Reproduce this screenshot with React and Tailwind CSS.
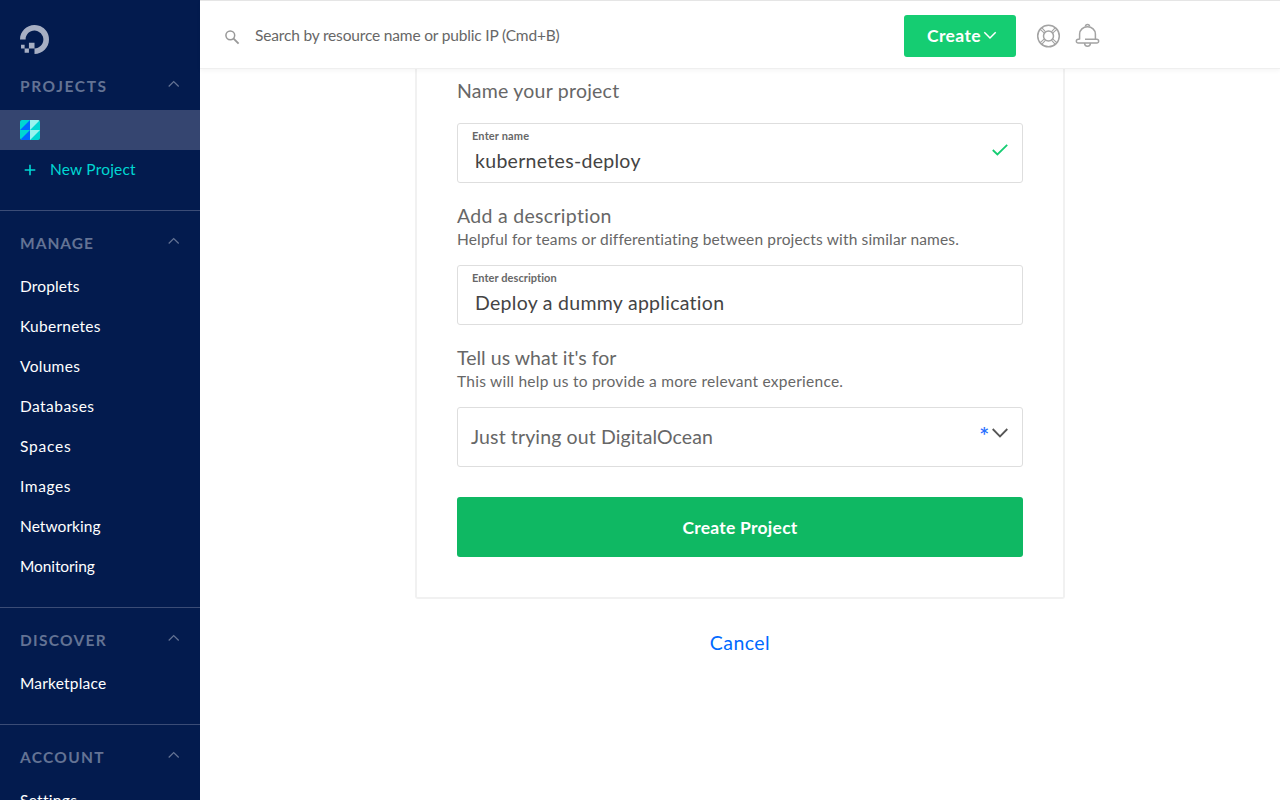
import React from "react";

function Chevron({ className, d, w, h, stroke = 1.2 }) {
  return (
    <svg className={className} width={w} height={h} viewBox={`0 0 ${w} ${h}`} fill="none" stroke="currentColor" strokeWidth={stroke}>
      <path d={d} />
    </svg>
  );
}

function SectionHeader({ label, tracking }) {
  return (
    <div className="flex h-14 items-center justify-between px-5 pt-2 text-[#647394]">
      <h2 className={`text-[15.5px] font-bold leading-6 ${tracking}`}>{label}</h2>
      <Chevron className="mb-[5px]" w={12} h={8} d="M.7 6.5 5.7 1.5 10.7 6.5" />
    </div>
  );
}

function NavItem({ label, tracking }) {
  return (
    <a className="flex h-10 items-center px-5 pb-[2px] text-white">
      <span className={`text-[15.5px] leading-6 ${tracking}`}>{label}</span>
    </a>
  );
}

const sections = [
  {
    label: "MANAGE",
    tracking: "tracking-[1px]",
    items: [
      ["Droplets", "tracking-[0.15px]"],
      ["Kubernetes", "tracking-[0.25px]"],
      ["Volumes", "tracking-[0.3px]"],
      ["Databases", "tracking-[0.45px]"],
      ["Spaces", "tracking-[0.8px]"],
      ["Images", "tracking-[0.6px]"],
      ["Networking", "tracking-[0.05px]"],
      ["Monitoring", "tracking-[-0.1px]"],
    ],
  },
  { label: "DISCOVER", tracking: "tracking-[1.3px]", items: [["Marketplace", "tracking-[0.2px]"]] },
  { label: "ACCOUNT", tracking: "tracking-[1.3px]", items: [["Settings", "tracking-[0.3px]"]] },
];

function Sidebar() {
  return (
    <aside className="h-full w-[200px] shrink-0 overflow-hidden bg-[#031b4e]">
      <div className="flex h-[54px] items-end px-5">
        <svg width="29" height="29" viewBox="0 0 24 24" fill="#a7afc3">
          <path d="M12.04 0C5.408-.02.005 5.37.005 11.992h4.638c0-4.923 4.882-8.731 10.064-6.855a6.95 6.95 0 014.147 4.148c1.889 5.177-1.924 10.055-6.84 10.064v-4.61H7.391v4.623h4.61V24c7.86 0 13.967-7.588 11.397-15.83-1.115-3.59-3.985-6.446-7.575-7.575A12.8 12.8 0 0012.039 0zM7.39 19.362H3.828v3.564H7.39zm-3.563 0v-2.978H.85v2.978z" />
        </svg>
      </div>
      <div className="h-14">
        <SectionHeader label="PROJECTS" tracking="tracking-[1.6px]" />
      </div>
      <div className="flex h-10 items-center bg-[#354570] px-5">
        <svg className="rounded-[2px]" width="20" height="20" viewBox="0 0 20 20">
          <path fill="#00d7d2" d="M0 0h20v20H0z" />
          <path fill="#0069ff" d="M10 0v10H0zM10 10v10H0z" />
          <path fill="#99f3ee" d="M10 0h10L10 10zM10 10h10L10 20z" />
        </svg>
      </div>
      <a className="flex h-10 items-center pb-[2px] pl-[24px] text-[#00d7d2]">
        <Chevron className="mt-px" w={12} h={12} stroke={1.6} d="M6 .7v10.6M.7 6h10.6" />
        <span className="ml-[14px] text-[15.5px] leading-6 tracking-[0.2px]">New Project</span>
      </a>
      <div className="h-5" />
      {sections.map((s) => (
        <section key={s.label} className="border-t border-[#3b4c76] pb-5">
          <SectionHeader label={s.label} tracking={s.tracking} />
          {s.items.map(([label, tracking]) => (
            <NavItem key={label} label={label} tracking={tracking} />
          ))}
        </section>
      ))}
    </aside>
  );
}

function TopBar() {
  return (
    <header className="z-10 flex h-[69px] shrink-0 items-center border-b border-t border-b-[#efefef] border-t-[#e5e5e5] bg-white pl-6 shadow-[0_2px_4px_rgba(0,0,0,0.04)]">
      <svg className="mt-1" width="16" height="16" viewBox="0 0 16 16" fill="none" stroke="#999" strokeWidth="1.5">
        <circle cx="6.3" cy="6.3" r="4.4" />
        <path strokeWidth="1.9" d="M9.6 9.6 14.6 14.6" />
      </svg>
      <span className="ml-[15px] w-[649px] text-[15.5px] leading-6 tracking-[-0.17px] text-[#676767]">
        Search by resource name or public IP (Cmd+B)
      </span>
      <button className="mt-[2px] flex h-[42px] w-28 items-center rounded-[3px] bg-[#15cd72] pl-[23px] text-white">
        <span className="-ml-px mr-px mt-px w-[56px] whitespace-nowrap text-[17.5px] font-bold leading-6 tracking-[0.35px]">Create</span>
        <Chevron w={14} h={9} stroke={1.5} d="M1.3 1.3 7 7 12.7 1.3" />
      </button>
      <svg className="ml-5 mt-[2px]" width="25" height="25" viewBox="0 0 25 25" fill="none" stroke="#a3a3a3" strokeWidth="1.5">
        <circle cx="12.5" cy="13" r="10.8" />
        <circle cx="12.5" cy="13" r="5" />
        <path d="M4.3 6.4 8.3 10.1M5.9 4.8 9.6 8.8M19.1 4.8 15.4 8.8M20.7 6.4 16.7 10.1M4.3 19.6 8.3 15.9M5.9 21.2 9.6 17.2M20.7 19.6 16.7 15.9M19.1 21.2 15.4 17.2" strokeWidth="1.1" />
      </svg>
      <svg className="ml-[14px] mt-[1px]" width="25" height="26" viewBox="0 0 25 26" fill="none" stroke="#a3a3a3" strokeWidth="1.5">
        <path d="M10.5 4.6a2 2 0 1 1 4 0" />
        <path d="M4.6 17.6v-5.6a7.9 7.3 0 0 1 15.8 0v5.6" />
        <path d="M10 17.3H21.8a1.8 1.8 0 0 1 0 3.7H3.2a1.8 1.8 0 0 1 0-3.7H4.6" />
        <path d="M9.6 21a2.9 3.3 0 0 0 5.8 0" />
      </svg>
    </header>
  );
}

function Field({ label, value, labelTracking, valueTracking, valid }) {
  return (
    <div className="flex h-[60px] items-start justify-between rounded-[3px] border border-[#dedede] pl-[14px] pr-[14px]">
      <div>
        <div className={`mt-[5px] text-[11px] font-bold leading-[14px] text-[#676767] ${labelTracking}`}>{label}</div>
        <div className={`ml-[3px] mt-[6px] text-[19.5px] leading-6 text-[#444] ${valueTracking}`}>{value}</div>
      </div>
      {valid && (
        <Chevron className="mt-5 text-[#15cd72]" w={16} h={12} stroke={1.8} d="M.8 6 5.4 10.4 15.2.8" />
      )}
    </div>
  );
}

function Heading({ children, tracking }) {
  return <h3 className={`text-[19.5px] font-normal leading-6 text-[#676767] ${tracking}`}>{children}</h3>;
}

function Hint({ children, tracking }) {
  return <p className={`text-[15.5px] leading-[22px] text-[#676767] ${tracking}`}>{children}</p>;
}

export default function App() {
  return (
    <div className="flex h-[800px] w-[1280px] overflow-hidden bg-white font-['Lato',sans-serif]">
      <Sidebar />
      <div className="flex min-w-0 flex-1 flex-col">
        <TopBar />
        <main className="flex flex-1 flex-col items-center">
          <div className="w-[650px] rounded-b-[3px] border-2 border-t-0 border-[#f1f1f1] px-10 pb-10 pt-[10px]">
            <Heading tracking="tracking-[0.23px]">Name your project</Heading>
            <div className="mt-5">
              <Field label="Enter name" value="kubernetes-deploy" labelTracking="tracking-[0.15px]" valueTracking="tracking-[0.3px]" valid />
            </div>
            <div className="mt-[21px]">
              <Heading tracking="tracking-[0.3px]">Add a description</Heading>
              <Hint tracking="tracking-[0.155px]">Helpful for teams or differentiating between projects with similar names.</Hint>
            </div>
            <div className="mt-[15px]">
              <Field label="Enter description" value="Deploy a dummy application" labelTracking="tracking-[0.07px]" valueTracking="tracking-[0.28px]" />
            </div>
            <div className="mt-[21px]">
              <Heading tracking="tracking-[0.03px]">Tell us what it's for</Heading>
              <Hint tracking="tracking-[0.25px]">This will help us to provide a more relevant experience.</Hint>
            </div>
            <div className="mt-[15px] flex h-[60px] items-center rounded-[3px] border border-[#dedede] pl-[13px] pr-[14px]">
              <span className="flex-1 text-[19.5px] leading-6 tracking-[0.12px] text-[#676767]">Just trying out DigitalOcean</span>
              <span className="mb-1 mr-[3px] font-['Inter',sans-serif] text-[19px] leading-6 text-[#2970ff]">*</span>
              <Chevron className="mb-2 text-[#555]" w={16} h={10} stroke={1.8} d="M.7 1 8 8.4 15.3 1" />
            </div>
            <button className="mt-[30px] flex h-[60px] w-full items-center justify-center rounded-[3px] bg-[#0fb863] pt-[2px] text-[17.5px] font-bold leading-6 tracking-[0.25px] text-white">
              Create Project
            </button>
          </div>
          <a className="mt-8 text-[19.5px] leading-6 tracking-[0.45px] text-[#0069ff]">Cancel</a>
        </main>
      </div>
    </div>
  );
}
